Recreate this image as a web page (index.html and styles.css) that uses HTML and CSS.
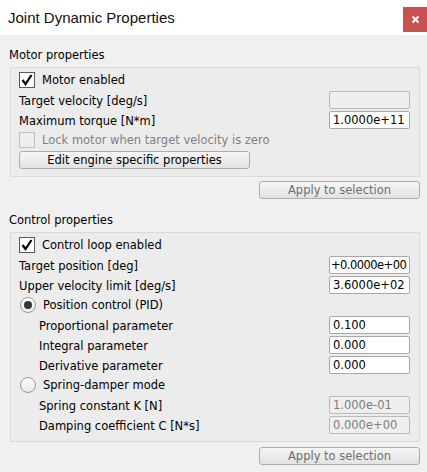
FILE: index.html
```html
<!DOCTYPE html>
<html>
<head>
<meta charset="utf-8">
<link rel="stylesheet" href="styles.css">
</head>
<body>
<div class="window">
  <header class="titlebar">
    <span class="title">Joint Dynamic Properties</span>
    <button class="close" aria-label="Close">
      <svg width="9" height="9" viewBox="0 0 9 9"><path d="M1.5 1.5 L7.5 7.5 M7.5 1.5 L1.5 7.5" stroke="#fff" stroke-width="2"/></svg>
    </button>
  </header>
  <main class="content">
    <div class="section-label">Motor properties</div>
    <section class="group">
      <div class="row">
        <label class="check"><span class="box"><svg width="14" height="14" viewBox="0 0 14 14"><path d="M2.5 7 L5.5 11 L11.5 2" fill="none" stroke="#000" stroke-width="2.2"/></svg></span>Motor enabled</label>
      </div>
      <div class="row"><span>Target velocity [deg/s]</span><input class="field disabled" readonly value=""></div>
      <div class="row"><span>Maximum torque [N*m]</span><input class="field" readonly value="1.0000e+11"></div>
      <div class="row">
        <label class="check disabled-text"><span class="box box-disabled"></span>Lock motor when target velocity is zero</label>
      </div>
      <div class="row"><button class="btn btn-edit">Edit engine specific properties</button></div>
    </section>
    <div class="actions"><button class="btn btn-apply">Apply to selection</button></div>

    <div class="section-label label-2">Control properties</div>
    <section class="group">
      <div class="row">
        <label class="check"><span class="box"><svg width="14" height="14" viewBox="0 0 14 14"><path d="M2.5 7 L5.5 11 L11.5 2" fill="none" stroke="#000" stroke-width="2.2"/></svg></span>Control loop enabled</label>
      </div>
      <div class="row"><span>Target position [deg]</span><input class="field tight" readonly value="+0.0000e+00"></div>
      <div class="row"><span>Upper velocity limit [deg/s]</span><input class="field" readonly value="3.6000e+02"></div>
      <div class="row"><label class="radio"><span class="circle"><span class="dot"></span></span>Position control (PID)</label></div>
      <div class="row sub"><span>Proportional parameter</span><input class="field" readonly value="0.100"></div>
      <div class="row sub"><span>Integral parameter</span><input class="field" readonly value="0.000"></div>
      <div class="row sub"><span>Derivative parameter</span><input class="field" readonly value="0.000"></div>
      <div class="row"><label class="radio"><span class="circle"></span>Spring-damper mode</label></div>
      <div class="row sub"><span>Spring constant K [N]</span><input class="field disabled" readonly value="1.000e-01"></div>
      <div class="row sub"><span>Damping coefficient C [N*s]</span><input class="field disabled" readonly value="0.000e+00"></div>
    </section>
    <div class="actions actions-2"><button class="btn btn-apply">Apply to selection</button></div>
  </main>
</div>
</body>
</html>
```
FILE: styles.css
```css
* { box-sizing: border-box; }

body {
  margin: 0;
  background: #f0f0f0;
  font-family: "DejaVu Sans", sans-serif;
  font-size: 11.5px;
  color: #000;
}

.titlebar {
  height: 35px;
  background: #fff;
  display: flex;
  justify-content: space-between;
  align-items: flex-start;
}

.title {
  font-family: "Liberation Sans", Arial, sans-serif;
  font-size: 15px;
  line-height: 35px;
  padding-left: 8px;
  color: #111;
}

.close {
  width: 24px;
  height: 25px;
  margin-top: 7px;
  padding: 0;
  border: 0;
  background: #c75050;
  display: flex;
  align-items: center;
  justify-content: center;
}

.content {
  padding: 0 7px 0 10px;
}

.section-label {
  margin-top: 10px;
  margin-left: -1px;
  height: 20px;
  line-height: 21px;
}

.label-2 { margin-top: 11px; }

.group {
  margin-top: 2px;
  border: 1px solid #d9d9d9;
  background: #ececec;
  padding: 2px 9px 6px 8px;
}

.row {
  height: 20px;
  display: flex;
  align-items: center;
  justify-content: space-between;
}

.row > span { padding-top: 1px; }

.row.sub { padding-left: 20px; }

.check, .radio {
  display: flex;
  align-items: center;
}

.box {
  width: 16px;
  height: 16px;
  border: 1px solid #5a5a5a;
  background: #fff;
  margin-right: 7px;
  display: flex;
  align-items: center;
  justify-content: center;
}

.box-disabled {
  border-color: #c2c2c2;
  background: #eeeeee;
}

.disabled-text { color: #808080; }

.circle {
  width: 16px;
  height: 16px;
  margin-left: 1px;
  margin-right: 7px;
  border: 1px solid #9a9a9a;
  border-radius: 50%;
  background: linear-gradient(#fbfbfb, #eaeaea);
  display: flex;
  align-items: center;
  justify-content: center;
}

.dot {
  width: 8px;
  height: 8px;
  border-radius: 50%;
  background: #353535;
}

.field {
  width: 81px;
  height: 18px;
  border: 1px solid #a8a8a8;
  border-radius: 2px;
  background: #fff;
  padding: 0 1px 0 3px;
  font: inherit;
  color: #000;
  outline: none;
}

.field.tight { padding-left: 1px; letter-spacing: -0.55px; }

.field.disabled {
  background: #efefef;
  border-color: #b9b9b9;
  color: #7d7d7d;
}

.btn {
  height: 18px;
  padding: 0;
  border: 1px solid #adadad;
  border-radius: 3px;
  background: linear-gradient(#f6f6f6, #e2e2e2);
  font: inherit;
  color: #000;
}

.btn-edit { width: 231px; }

.actions {
  display: flex;
  justify-content: flex-end;
  margin-top: 4px;
}

.actions-2 { margin-top: 5px; }

.btn-apply {
  width: 161px;
  color: #6e6e6e;
}
```
